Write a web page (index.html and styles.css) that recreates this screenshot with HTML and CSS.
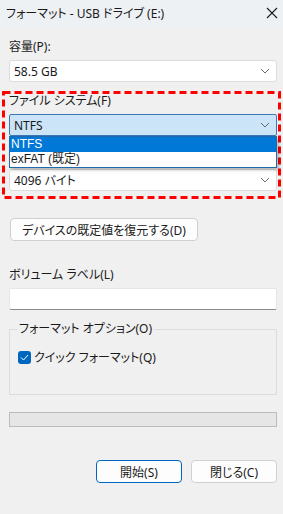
FILE: index.html
```html
<!DOCTYPE html>
<html lang="ja">
<head>
  <meta charset="UTF-8" />
  <meta name="viewport" content="width=device-width, initial-scale=1.0"/>
  <title>フォーマット - USB ドライブ (E:)</title>
  <link rel="stylesheet" href="styles.css">
</head>
<body>

  <div class="titlebar">
    <span class="title">フォーマット - USB ドライブ (E:)</span>
    <svg class="close" width="12" height="12" viewBox="0 0 12 12">
      <path d="M1 1 L11 11 M11 1 L1 11" stroke="#1a1a1a" stroke-width="1.1" fill="none"/>
    </svg>
  </div>

  <div class="content">
    <div class="field-label first">容量(P):</div>
    <div class="combo">
      <span>58.5 GB</span>
      <svg class="chev" width="10" height="6" viewBox="0 0 10 6"><path d="M1 1 L5 5 L9 1" stroke="#6b6b6b" fill="none"/></svg>
    </div>

    <div class="field-label fs">ファイル システム(F)</div>
    <div class="fs-wrap">
      <div class="combo active">
        <span>NTFS</span>
        <svg class="chev" width="10" height="6" viewBox="0 0 10 6"><path d="M1 1 L5 5 L9 1" stroke="#6b6b6b" fill="none"/></svg>
      </div>
      <ul class="dropdown">
        <li class="selected">NTFS</li>
        <li>exFAT (既定)</li>
      </ul>
    </div>

    <!-- covered by the open list -->
    <div class="field-label covered">アロケーション ユニット サイズ(A)</div>
    <div class="combo">
      <span>4096 バイト</span>
      <svg class="chev" width="10" height="6" viewBox="0 0 10 6"><path d="M1 1 L5 5 L9 1" stroke="#6b6b6b" fill="none"/></svg>
    </div>

    <button class="btn restore">デバイスの既定値を復元する(D)</button>

    <div class="field-label volume">ボリューム ラベル(L)</div>
    <div class="textbox"></div>

    <fieldset class="group">
      <legend>フォーマット オプション(O)</legend>
      <label class="check">
        <span class="box">
          <svg width="9" height="7" viewBox="0 0 9 7"><path d="M1 3.5 L3.5 6 L8 1" stroke="#fff" stroke-width="1" fill="none"/></svg>
        </span>
        クイック フォーマット(Q)
      </label>
    </fieldset>

    <div class="progress"></div>

    <div class="actions">
      <button class="btn primary">開始(S)</button>
      <button class="btn">閉じる(C)</button>
    </div>
  </div>

  <svg class="highlight" width="279" height="108" viewBox="0 0 279 108">
    <rect x="1.5" y="1.5" width="276" height="105" fill="none" stroke="#ff0000" stroke-width="3" stroke-dasharray="7 4"/>
  </svg>

</body>
</html>
```

FILE: styles.css
```css
body {
  margin: 0;
  width: 283px;
  height: 514px;
  background: #f0f0f0;
  font-family: 'Noto Sans', 'Noto Sans CJK JP', sans-serif;
  font-size: 12px;
  font-feature-settings: "palt";
  color: #1a1a1a;
  position: relative;
  overflow: hidden;
}

.titlebar {
  height: 29px;
  background: #eef1f4;
  display: flex;
  align-items: center;
  justify-content: space-between;
  padding: 0 5px 0 6px;
}

.title {
  font-size: 12px;
  margin-top: -3px;
}

.close {
  margin-top: -4px;
}

.content {
  padding: 0 6px 0 9px;
}

.field-label {
  height: 16px;
  line-height: 16px;
  margin-top: 12px;
}

.field-label.first {
  margin-top: 10px;
}

.field-label.fs {
  margin-top: 11px;
}

.field-label.covered {
  visibility: hidden;
}

.field-label.volume {
  margin-top: 26px;
}

.combo {
  height: 22px;
  box-sizing: border-box;
  margin-top: 5px;
  background: #ffffff;
  border: 1px solid #dcdcdc;
  border-radius: 3px;
  display: flex;
  align-items: center;
  justify-content: space-between;
  padding: 0 6px 0 4px;
}

.combo.active {
  background: #cce4f7;
  border-color: #3a7ab8;
  border-radius: 2px;
}

.fs-wrap {
  position: relative;
}

.dropdown {
  position: absolute;
  left: 0;
  right: 0;
  top: 22px;
  margin: 0;
  padding: 0;
  list-style: none;
  background: #ffffff;
  border: 1px solid #1f6aad;
  box-shadow: 2px 2px 3px rgba(0, 0, 0, 0.25);
  z-index: 2;
  font-family: 'Liberation Sans', 'Noto Sans CJK JP', sans-serif;
}

.dropdown li {
  height: 15px;
  line-height: 15px;
  padding-left: 1px;
  overflow: hidden;
}

.dropdown li.selected {
  background: #0078d7;
  color: #ffffff;
}

.btn {
  font-family: inherit;
  font-size: 12px;
  font-feature-settings: "palt";
  color: #1a1a1a;
  background: #fdfdfd;
  border: 1px solid #d0d0d0;
  border-radius: 4px;
  height: 23px;
  padding: 0;
}

.restore {
  display: block;
  width: 188px;
  margin: 27px 0 0 1px;
}

.textbox {
  height: 22px;
  box-sizing: border-box;
  margin-top: 5px;
  background: #ffffff;
  border: 1px solid #e6e6e6;
  border-bottom: 1px solid #8a8a8a;
  border-radius: 2px;
}

.group {
  margin: 11px 0 0 0;
  padding: 6px 8px 0 8px;
  height: 74px;
  box-sizing: border-box;
  border: 1px solid #dcdcdc;
  min-width: 0;
}

.group legend {
  padding: 0 2px;
  margin-left: -1px;
  line-height: 16px;
}

.check {
  display: flex;
  align-items: center;
  gap: 3px;
  margin-top: 5px;
}

.box {
  width: 13px;
  height: 13px;
  border-radius: 3px;
  background: #0067c0;
  display: flex;
  align-items: center;
  justify-content: center;
}

.progress {
  height: 15px;
  box-sizing: border-box;
  margin-top: 17px;
  background: #e6e6e6;
  border: 1px solid #bcbcbc;
}

.actions {
  display: flex;
  justify-content: flex-end;
  gap: 9px;
  margin-top: 33px;
}

.actions .btn {
  width: 86px;
}

.btn.primary {
  border-color: #0067c0;
}

.highlight {
  position: absolute;
  left: 2px;
  top: 91px;
}
```
